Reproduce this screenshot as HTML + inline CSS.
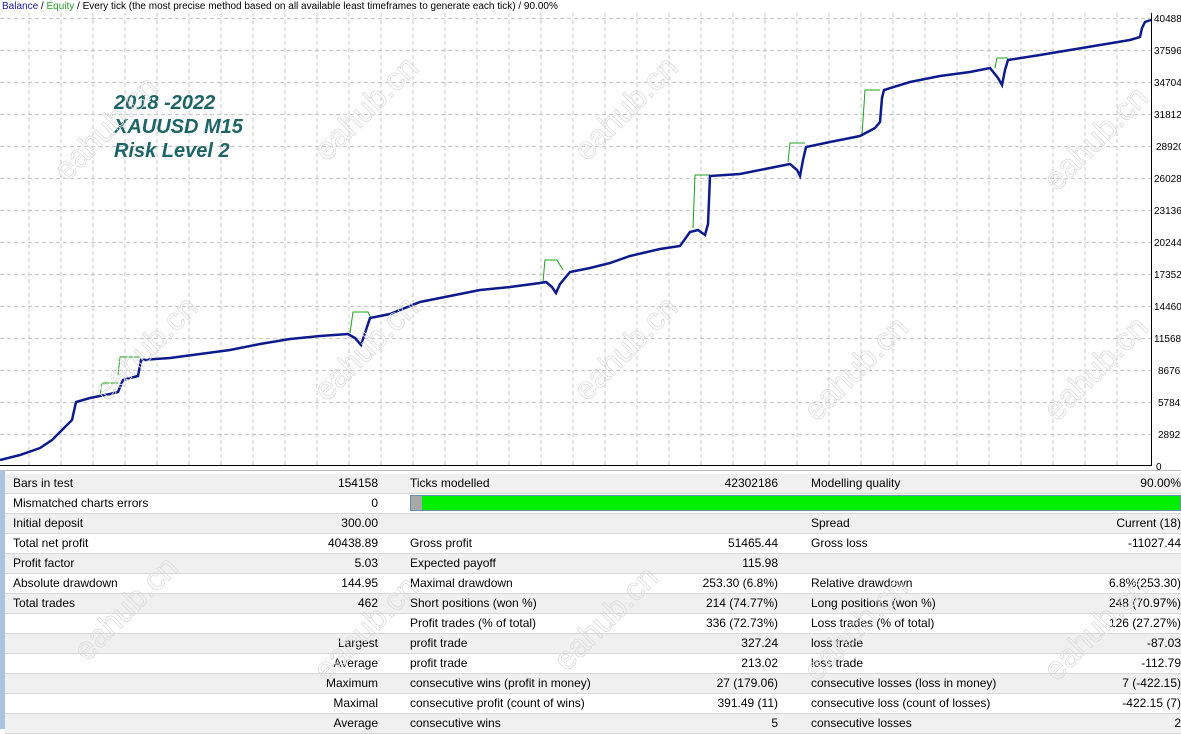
<!DOCTYPE html>
<html><head><meta charset="utf-8"><style>
body{margin:0;width:1181px;height:729px;overflow:hidden;background:#fff;font-family:"Liberation Sans",sans-serif;position:relative}
svg.t{position:absolute;left:0;top:0;width:1181px;height:470px}
.row{position:absolute;left:5px;width:1176px;height:20px;border-bottom:1px solid #d8d8d8;box-sizing:border-box;font-size:12px;line-height:19px;color:#000}
.g{background:#f0f0f0}.w{background:#fff}
.row span{position:absolute;top:0;white-space:nowrap}
.l1{left:8px}.v1{right:803px;text-align:right}
.l2{left:405px}.v2{right:403px}
.l3{left:806px}.v3{right:0}
.wm{position:absolute;font-size:32px;color:transparent;-webkit-text-stroke:0.8px #dcdcdc;transform:rotate(-45deg);font-family:"Liberation Sans",sans-serif;white-space:nowrap}
</style></head><body>
<svg class="t" width="1181" height="470" viewBox="0 0 1181 470">
<g stroke="#c8c8c8" stroke-dasharray="4,3" stroke-width="1">
<path d="M29 13V465M61 13V465M93 13V465M125 13V465M157 13V465M189 13V465M221 13V465M253 13V465M285 13V465M317 13V465M349 13V465M381 13V465M413 13V465M445 13V465M477 13V465M509 13V465M541 13V465M573 13V465M605 13V465M637 13V465M669 13V465M701 13V465M733 13V465M765 13V465M797 13V465M829 13V465M861 13V465M893 13V465M925 13V465M957 13V465M989 13V465M1021 13V465M1053 13V465M1085 13V465M1117 13V465"/>
<path d="M0 18.5H1151M0 50.5H1151M0 82.5H1151M0 114.5H1151M0 146.5H1151M0 178.5H1151M0 210.5H1151M0 242.5H1151M0 274.5H1151M0 306.5H1151M0 338.5H1151M0 370.5H1151M0 402.5H1151M0 434.5H1151"/>
</g>
<path d="M1151.5 13V466M0 465.5H1151" stroke="#000" stroke-width="1"/>
<g font-size="10" fill="#000" font-family="Liberation Sans,sans-serif">
<text x="1154" y="22">40488</text><text x="1154" y="54">37596</text><text x="1154" y="86">34704</text><text x="1154" y="118">31812</text><text x="1156" y="150">28920</text><text x="1154" y="182">26028</text><text x="1154" y="214">23136</text><text x="1154" y="246">20244</text><text x="1154" y="278">17352</text><text x="1154" y="310">14460</text><text x="1154" y="342">11568</text><text x="1158" y="374">8676</text><text x="1158" y="406">5784</text><text x="1158" y="438">2892</text><text x="1156" y="470">0</text>
</g>
<path fill="none" stroke="#1fa01f" stroke-width="1" d="M118 375L120 357H140L142 362M350 333L353 312H368L371 318M543 282L545 260H557L563 270M693 228L695 175H710M788 162L790 143H805M862 135L865 90H880M995 68L997 58H1008M100 396L102 383H118"/>
<path fill="none" stroke="#0d1a8c" stroke-width="2.5" d="M0 460L20 455L40 448L52 440L60 432L72 420L76 402L90 398L100 396L110 394L118 392L123 380L130 378L138 376L141 360L170 358L200 354L230 350L260 344L290 339L320 336L348 334L355 338L361 345L366 330L370 318L390 314L420 302L450 296L480 290L510 287L540 283L546 282L552 287L556 293L560 284L570 272L590 268L610 263L630 256L660 249L680 246L690 232L698 230L705 235L708 224L710 176L740 174L770 168L790 164L797 170L800 176L803 160L806 147L830 142L860 136L875 128L880 122L882 98L884 90L910 82L940 76L970 72L990 68L998 78L1002 85L1005 70L1008 60L1040 55L1070 50L1100 45L1130 40L1140 37L1142 28L1145 22L1151 20"/>
<text x="2" y="9" font-size="10" font-family="Liberation Sans,sans-serif"><tspan fill="#1a1a9a">Balance</tspan><tspan fill="#000"> / </tspan><tspan fill="#2a9a2a">Equity</tspan><tspan fill="#000"> / Every tick (the most precise method based on all available least timeframes to generate each tick) / 90.00%</tspan></text>
<g font-size="20" font-weight="bold" font-style="italic" fill="#1e6466" font-family="Liberation Sans,sans-serif">
<text x="114" y="109">2018 -2022</text><text x="114" y="133">XAUUSD M15</text><text x="114" y="157">Risk Level 2</text></g>
</svg>
<div style="position:absolute;left:0;top:470px;width:5px;height:259px;background:#a9c3e0"></div>
<div style="position:absolute;left:5px;top:470px;width:1176px;height:4px;background:#fff;border-top:1px solid #bbb"></div>
<div class="row g" style="top:474px"><span class="l1">Bars in test</span><span class="v1">154158</span><span class="l2">Ticks modelled</span><span class="v2">42302186</span><span class="l3">Modelling quality</span><span class="v3">90.00%</span></div>
<div class="row w" style="top:494px"><span class="l1">Mismatched charts errors</span><span class="v1">0</span>
<div style="position:absolute;left:405px;top:1px;width:771px;height:16px;background:#00ee00;border:1px solid #6a8fae;box-sizing:border-box"><div style="width:11px;height:14px;background:#a8a8a8"></div></div></div>
<div class="row g" style="top:514px"><span class="l1">Initial deposit</span><span class="v1">300.00</span><span class="l3">Spread</span><span class="v3">Current (18)</span></div>
<div class="row w" style="top:534px"><span class="l1">Total net profit</span><span class="v1">40438.89</span><span class="l2">Gross profit</span><span class="v2">51465.44</span><span class="l3">Gross loss</span><span class="v3">-11027.44</span></div>
<div class="row g" style="top:554px"><span class="l1">Profit factor</span><span class="v1">5.03</span><span class="l2">Expected payoff</span><span class="v2">115.98</span></div>
<div class="row w" style="top:574px"><span class="l1">Absolute drawdown</span><span class="v1">144.95</span><span class="l2">Maximal drawdown</span><span class="v2">253.30 (6.8%)</span><span class="l3">Relative drawdown</span><span class="v3">6.8%(253.30)</span></div>
<div class="row g" style="top:594px"><span class="l1">Total trades</span><span class="v1">462</span><span class="l2">Short positions (won %)</span><span class="v2">214 (74.77%)</span><span class="l3">Long positions (won %)</span><span class="v3">248 (70.97%)</span></div>
<div class="row w" style="top:614px"><span class="l2">Profit trades (% of total)</span><span class="v2">336 (72.73%)</span><span class="l3">Loss trades (% of total)</span><span class="v3">126 (27.27%)</span></div>
<div class="row g" style="top:634px"><span class="v1">Largest</span><span class="l2">profit trade</span><span class="v2">327.24</span><span class="l3">loss trade</span><span class="v3">-87.03</span></div>
<div class="row w" style="top:654px"><span class="v1">Average</span><span class="l2">profit trade</span><span class="v2">213.02</span><span class="l3">loss trade</span><span class="v3">-112.79</span></div>
<div class="row g" style="top:674px"><span class="v1">Maximum</span><span class="l2">consecutive wins (profit in money)</span><span class="v2">27 (179.06)</span><span class="l3">consecutive losses (loss in money)</span><span class="v3">7 (-422.15)</span></div>
<div class="row w" style="top:694px"><span class="v1">Maximal</span><span class="l2">consecutive profit (count of wins)</span><span class="v2">391.49 (11)</span><span class="l3">consecutive loss (count of losses)</span><span class="v3">-422.15 (7)</span></div>
<div class="row g" style="top:714px"><span class="v1">Average</span><span class="l2">consecutive wins</span><span class="v2">5</span><span class="l3">consecutive losses</span><span class="v3">2</span></div>
<div class="wm" style="left:40px;top:110px">eahub.cn</div>
<div class="wm" style="left:300px;top:90px">eahub.cn</div>
<div class="wm" style="left:560px;top:90px">eahub.cn</div>
<div class="wm" style="left:1030px;top:120px">eahub.cn</div>
<div class="wm" style="left:80px;top:330px">eahub.cn</div>
<div class="wm" style="left:300px;top:330px">eahub.cn</div>
<div class="wm" style="left:560px;top:330px">eahub.cn</div>
<div class="wm" style="left:790px;top:350px">eahub.cn</div>
<div class="wm" style="left:1030px;top:350px">eahub.cn</div>
<div class="wm" style="left:60px;top:590px">eahub.cn</div>
<div class="wm" style="left:300px;top:610px">eahub.cn</div>
<div class="wm" style="left:540px;top:600px">eahub.cn</div>
<div class="wm" style="left:790px;top:610px">eahub.cn</div>
<div class="wm" style="left:1030px;top:610px">eahub.cn</div>
</body></html>
